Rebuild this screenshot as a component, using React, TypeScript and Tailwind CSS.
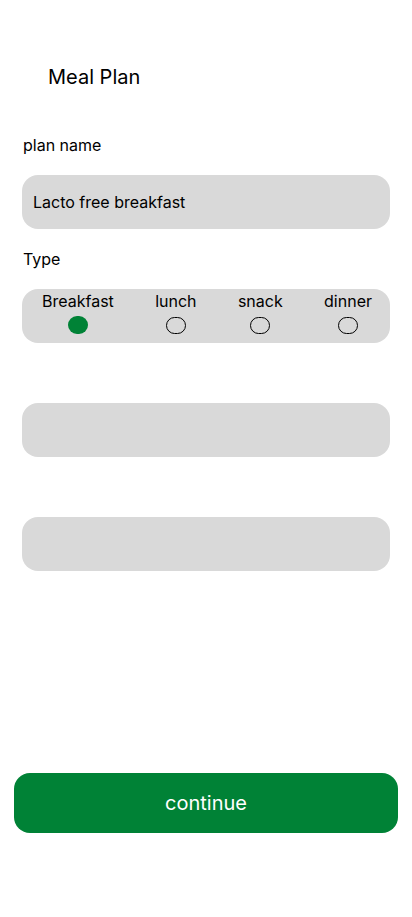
export default function App() {
  const types = [
    { label: "Breakfast", on: true },
    { label: "lunch", on: false },
    { label: "snack", on: false },
    { label: "dinner", on: false },
  ];
  return (
    <div
      className="w-[412px] h-[917px] bg-white text-black flex flex-col"
      style={{ fontFamily: "Inter, 'Noto Sans', sans-serif" }}
    >
      <div className="px-[22px] flex flex-col">
        <h1 className="mt-[63px] ml-[26px] text-[20px] leading-[28px] font-normal">Meal Plan</h1>
        <div className="mt-[42px] ml-[1px] text-[16px] leading-[24px]">plan name</div>
        <div className="mt-[18px] h-[54px] rounded-[16px] bg-[#d9d9d9] flex items-center px-[11px] text-[16px]">
          Lacto free breakfast
        </div>
        <div className="mt-[18px] ml-[1px] text-[16px] leading-[24px]">Type</div>
        <div className="mt-[18px] h-[54px] rounded-[16px] bg-[#d9d9d9] flex justify-between pl-[20px] pr-[18px] pt-[2px]">
          {types.map((t) => (
            <div key={t.label} className="flex flex-col items-center">
              <span className="text-[16px] leading-[20px]">{t.label}</span>
              <span
                className={
                  t.on
                    ? "mt-[5px] w-[20px] h-[18px] rounded-full bg-[#008236]"
                    : "mt-[6px] w-[20px] h-[17px] rounded-full border border-black"
                }
              />
            </div>
          ))}
        </div>
        <div className="mt-[60px] h-[54px] rounded-[16px] bg-[#d9d9d9]" />
        <div className="mt-[60px] h-[54px] rounded-[16px] bg-[#d9d9d9]" />
      </div>
      <div className="px-[14px] mt-[202px]">
        <button className="w-full h-[60px] rounded-[16px] bg-[#008236] text-white text-[20px] flex items-center justify-center">
          continue
        </button>
      </div>
    </div>
  );
}
